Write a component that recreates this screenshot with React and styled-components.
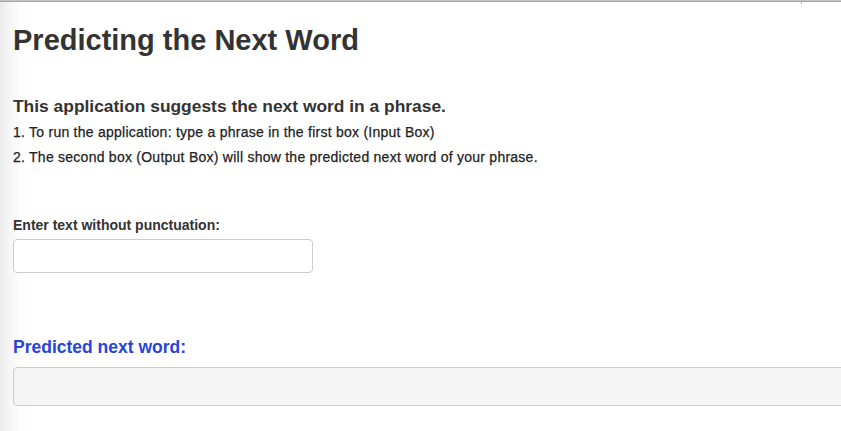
import React from "react";
import styled, { createGlobalStyle } from "styled-components";

const Global = createGlobalStyle`
  html, body { margin: 0; padding: 0; background: #fff; }
  body { font-family: "Liberation Sans", Arial, sans-serif; color: #333; }
`;

const Frame = styled.div`
  width: 841px;
  height: 431px;
  overflow: hidden;
  background: linear-gradient(90deg, #ebebeb 0px, #f6f6f6 10px, #fdfdfd 20px, #fff 28px);
  display: flex;
  flex-direction: column;
`;

const TopBar = styled.div`
  height: 2px;
  flex: none;
  background: linear-gradient(180deg, #c4c4c4 0, #c4c4c4 1px, #a6a6a6 1px);
  display: flex;
`;

const Tick = styled.span`
  width: 1px;
  height: 4px;
  margin-left: 801px;
  background: #b8b8b8;
`;

const Content = styled.div`
  padding: 0 0 0 13px;
  display: flex;
  flex-direction: column;
`;

const Title = styled.h1`
  margin: 22px 0 0;
  font-size: 29px;
  line-height: 32px;
  font-weight: 700;
  color: #333;
`;

const Lead = styled.h4`
  margin: 40px 0 0;
  font-size: 17.4px;
  line-height: 20px;
  font-weight: 700;
  color: #333;
`;

const Note = styled.p`
  margin: 8px 0 0;
  font-size: 14px;
  line-height: 17px;
  font-weight: 400;
  letter-spacing: 0.25px;
  -webkit-text-stroke: 0.25px #222;
  color: #222;
`;

const Label = styled.label`
  display: block;
  margin-top: 51px;
  font-size: 14px;
  line-height: 16px;
  font-weight: 700;
  color: #333;
`;

const Input = styled.input`
  box-sizing: border-box;
  margin-top: 6px;
  width: 300px;
  height: 34px;
  border: 1px solid #cccccc;
  border-radius: 4px;
  background: #fff;
  padding: 6px 12px;
  font: inherit;
  outline: none;
`;

const OutputTitle = styled.h3`
  margin: 64px 0 0;
  font-size: 17.5px;
  line-height: 20px;
  font-weight: 700;
  color: #2845da;
`;

const OutputBox = styled.pre`
  box-sizing: border-box;
  margin: 10px -10px 0 0;
  height: 39px;
  border: 1px solid #cccccc;
  border-radius: 4px;
  background: #f5f5f5;
`;

export default function App() {
  return (
    <Frame>
      <Global />
      <TopBar><Tick /></TopBar>
      <Content>
        <Title>Predicting the Next Word</Title>
        <Lead>This application suggests the next word in a phrase.</Lead>
        <Note>1. To run the application: type a phrase in the first box (Input Box)</Note>
        <Note>2. The second box (Output Box) will show the predicted next word of your phrase.</Note>
        <Label htmlFor="txt">Enter text without punctuation:</Label>
        <Input id="txt" type="text" />
        <OutputTitle>Predicted next word:</OutputTitle>
        <OutputBox></OutputBox>
      </Content>
    </Frame>
  );
}
